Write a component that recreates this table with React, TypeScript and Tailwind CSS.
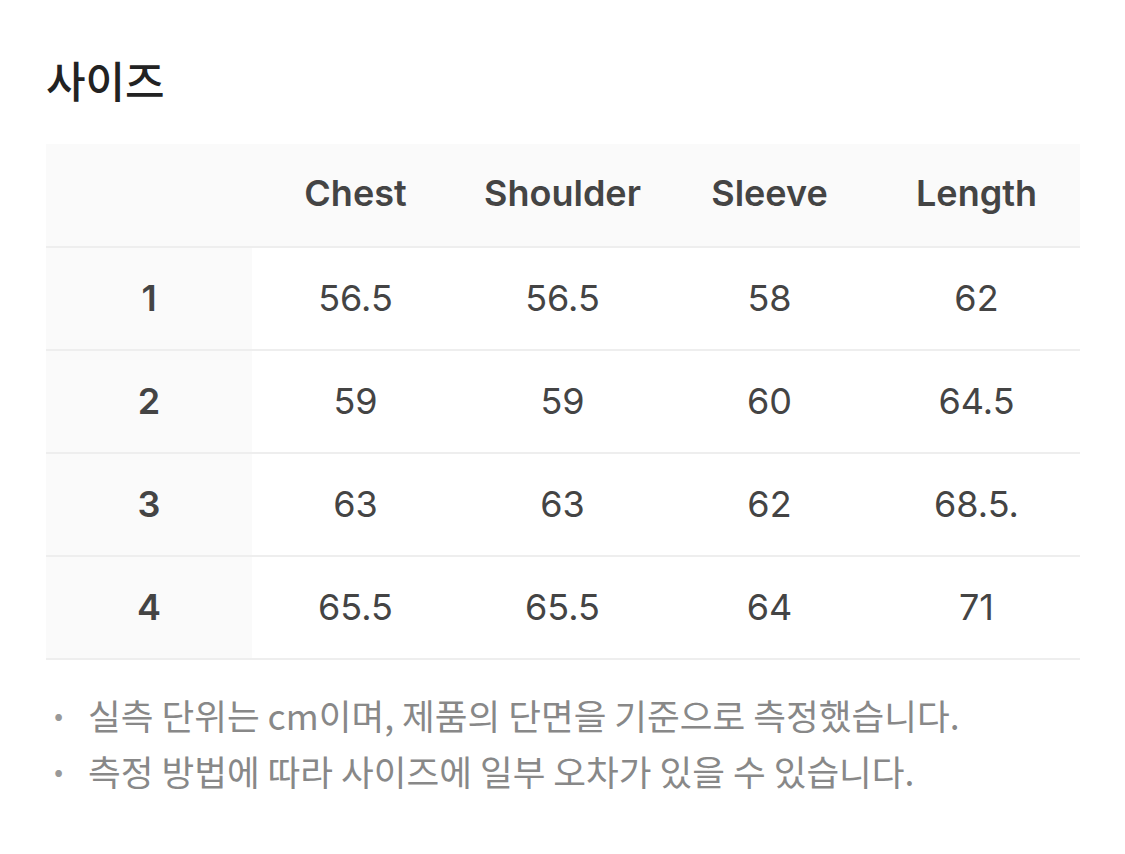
const rows = [
  ['1', '56.5', '56.5', '58', '62'],
  ['2', '59', '59', '60', '64.5'],
  ['3', '63', '63', '62', '68.5.'],
  ['4', '65.5', '65.5', '64', '71'],
];

const heads = ['Chest', 'Shoulder', 'Sleeve', 'Length'];

const notes = [
  '실측 단위는 cm이며, 제품의 단면을 기준으로 측정했습니다.',
  '측정 방법에 따라 사이즈에 일부 오차가 있을 수 있습니다.',
];

export default function App() {
  return (
    <div className="min-h-[854px] bg-white px-[46px] pt-[53px] font-['Inter','Noto_Sans_CJK_KR',sans-serif]">
      <h1 className="text-[43px] font-medium leading-[52px] text-[#222] font-['Noto_Sans_CJK_KR',sans-serif]">사이즈</h1>

      <table className="mt-[39px] w-[1034px] table-fixed border-collapse">
        <thead>
          <tr className="h-[103px] border-b-2 border-[#eeeeee] bg-[#fafafa]">
            <th className="w-[206px]"></th>
            {heads.map((h) => (
              <th key={h} className="pb-[4px] text-[36px] font-semibold text-[#444]">{h}</th>
            ))}
          </tr>
        </thead>
        <tbody>
          {rows.map((r) => (
            <tr key={r[0]} className="h-[103px] border-b-2 border-[#eeeeee]">
              <td className="bg-[#fafafa] pb-[2px] text-center text-[36px] font-semibold text-[#444]">{r[0]}</td>
              {r.slice(1).map((v, i) => (
                <td key={i} className="pb-[2px] text-center text-[36px] text-[#444]">{v}</td>
              ))}
            </tr>
          ))}
        </tbody>
      </table>

      <ul className="mt-[27px]">
        {notes.map((n) => (
          <li key={n} className="flex text-[35.6px] leading-[56px] text-[#888] font-['Noto_Sans_CJK_KR',sans-serif]">
            <span className="w-[42px] pl-[2px] text-[36px] font-bold text-[#999]">·</span>
            <span>{n}</span>
          </li>
        ))}
      </ul>
    </div>
  );
}
